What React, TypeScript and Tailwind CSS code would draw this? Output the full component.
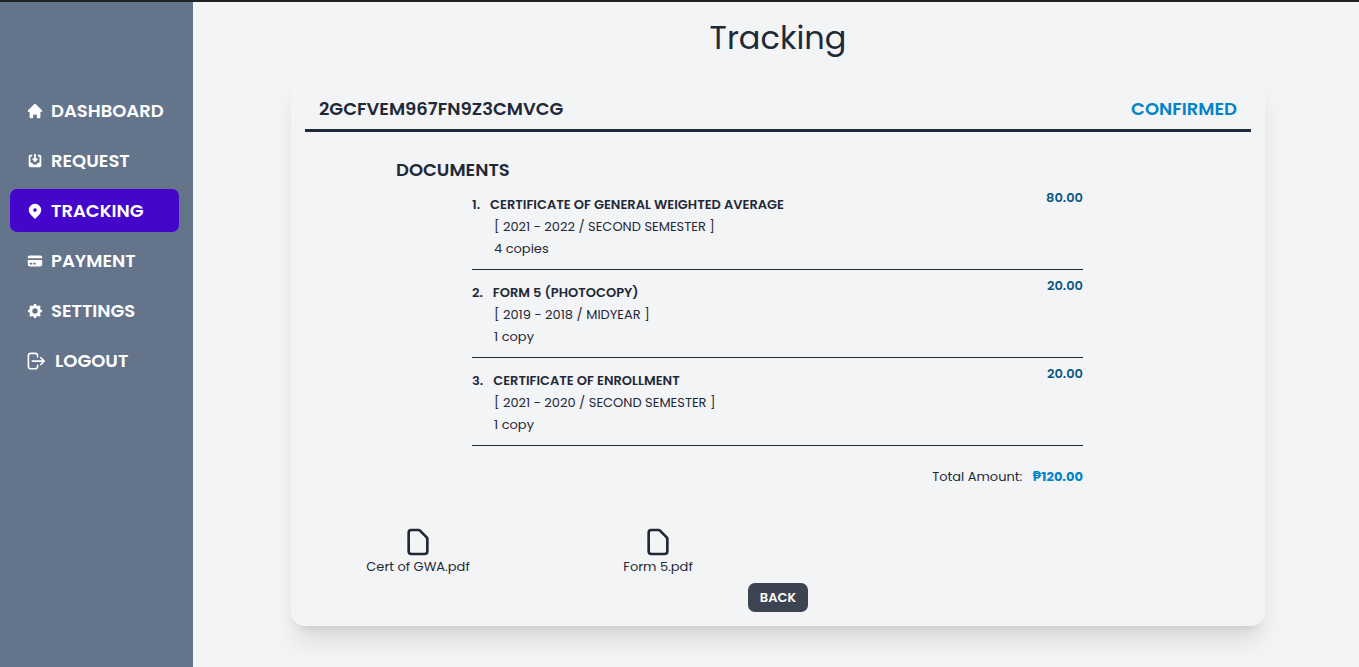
import {
  HiCog,
  HiCreditCard,
  HiHome,
  HiInboxIn,
  HiLocationMarker,
  HiOutlineDocument,
} from "react-icons/hi";

function LogoutIcon({ className }: { className?: string }) {
  return (
    <svg
      viewBox="0 0 22 22"
      fill="none"
      stroke="currentColor"
      strokeWidth="1.6"
      strokeLinecap="round"
      strokeLinejoin="round"
      className={className}
      aria-hidden="true"
    >
      <path d="M11.6 7V5.8a2.4 2.4 0 0 0-2.4-2.4H4.8a2.4 2.4 0 0 0-2.4 2.4v10.6a2.4 2.4 0 0 0 2.4 2.4h4.4a2.4 2.4 0 0 0 2.4-2.4V15.2" />
      <path d="M6.2 11.1h12M14.8 7.7l3.4 3.4-3.4 3.4" />
    </svg>
  );
}

const navItems = [
  { label: "DASHBOARD", Icon: HiHome, iconSize: "size-[18px]" },
  { label: "REQUEST", Icon: HiInboxIn, iconSize: "size-[18px]" },
  { label: "TRACKING", Icon: HiLocationMarker, iconSize: "size-[18px]", active: true },
  { label: "PAYMENT", Icon: HiCreditCard, iconSize: "size-[18px]" },
  { label: "SETTINGS", Icon: HiCog, iconSize: "size-[18px]" },
  { label: "LOGOUT", Icon: LogoutIcon, iconSize: "size-[22px]" },
];

const documents = [
  {
    name: "CERTIFICATE OF GENERAL WEIGHTED AVERAGE",
    period: "[ 2021 - 2022 / SECOND SEMESTER ]",
    copies: "4 copies",
    price: "80.00",
  },
  {
    name: "FORM 5 (PHOTOCOPY)",
    period: "[ 2019 - 2018 / MIDYEAR ]",
    copies: "1 copy",
    price: "20.00",
  },
  {
    name: "CERTIFICATE OF ENROLLMENT",
    period: "[ 2021 - 2020 / SECOND SEMESTER ]",
    copies: "1 copy",
    price: "20.00",
  },
];

const files = ["Cert of GWA.pdf", "Form 5.pdf"];

function Sidebar() {
  return (
    <nav className="w-[193px] shrink-0 bg-[#64748b] pt-[87px] pr-[14px] pl-[10px]">
      <ul className="flex flex-col gap-[7px]">
        {navItems.map(({ label, Icon, iconSize, active }) => (
          <li key={label}>
            <a
              href="#"
              className={`flex h-[43px] items-center gap-[7px] rounded-[7px] px-4 text-[18px] font-semibold text-white ${
                active ? "bg-[#4506cb]" : ""
              }`}
            >
              <Icon className={`shrink-0 ${iconSize}`} />
              {label}
            </a>
          </li>
        ))}
      </ul>
    </nav>
  );
}

export default function App() {
  return (
    <div className="flex min-h-screen flex-col border-t-2 border-[#222222] bg-[#f3f4f6] font-[Poppins,Inter,sans-serif] text-[#1f2937]">
      <div className="flex flex-1">
        <Sidebar />
        <main className="flex-1 pt-4 pr-[94px] pb-10 pl-[98px]">
          <h1 className="text-center text-[32px] leading-[40px]">Tracking</h1>
          <section className="mt-[14px] rounded-[14px] px-[7px] pb-[14px] text-[13px] leading-[22px] shadow-xl">
            <header className="mx-[7px] flex items-center justify-between border-b-3 border-[#1e293b] px-[14px] pt-6 pb-2 text-[18px] leading-[25px] font-semibold">
              <h2>2GCFVEM967FN9Z3CMVCG</h2>
              <span className="text-[#0284c7]">CONFIRMED</span>
            </header>
            <h3 className="mt-[25px] pl-[98px] text-[18px] leading-[25px] font-semibold">
              DOCUMENTS
            </h3>
            <div className="mt-[5px] pr-[175px] pl-[174px]">
              <ol className="flex flex-col gap-[5px]">
                {documents.map((doc, i) => (
                  <li
                    key={doc.name}
                    className="flex items-start justify-between border-b border-[#1e293b] pb-[9px]"
                  >
                    <div className="pt-[7px]">
                      <p className="flex gap-[10px] font-semibold">
                        <span>{i + 1}.</span>
                        <span>{doc.name}</span>
                      </p>
                      <p className="pl-[22px]">{doc.period}</p>
                      <p className="pl-[22px]">{doc.copies}</p>
                    </div>
                    <span className="font-semibold text-[#075985]">{doc.price}</span>
                  </li>
                ))}
              </ol>
              <p className="mt-5 flex justify-end gap-[10px]">
                <span>Total Amount:</span>
                <span className="font-bold text-[#0284c7]">₱120.00</span>
              </p>
            </div>
            <ul className="mt-[38px] grid grid-cols-4">
              {files.map((file) => (
                <li key={file} className="flex justify-center">
                  <a href="#" className="flex flex-col items-center">
                    <HiOutlineDocument className="size-[32px]" />
                    <span className="-mt-[2px]">{file}</span>
                  </a>
                </li>
              ))}
            </ul>
            <div className="mt-[5px] flex justify-center">
              <button
                type="button"
                className="h-[29px] rounded-[7px] bg-[#3d4451] px-3 leading-[18px] font-semibold text-white"
              >
                BACK
              </button>
            </div>
          </section>
        </main>
      </div>
    </div>
  );
}
